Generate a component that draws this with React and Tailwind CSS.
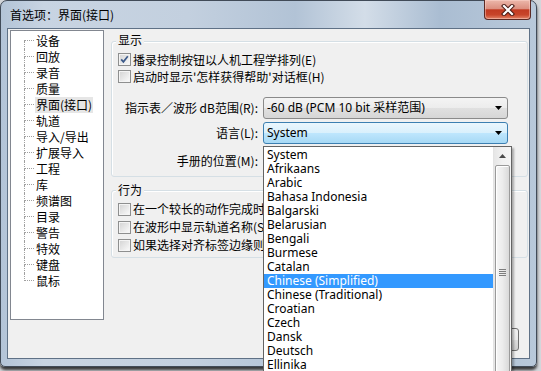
import React from "react";

const TREE = ["设备","回放","录音","质量","界面(接口)","轨道","导入/导出","扩展导入","工程","库","频谱图","目录","警告","特效","键盘","鼠标"];
const LANGS = ["System","Afrikaans","Arabic","Bahasa Indonesia","Balgarski","Belarusian","Bengali","Burmese","Catalan","Chinese (Simplified)","Chinese (Traditional)","Croatian","Czech","Dansk","Deutsch","Ellinika","English"];

function TreeRow({ label, first, last, selected }) {
  return (
    <div className="flex h-[16px] items-stretch">
      <div className="ml-[13px] flex w-[10px] flex-col">
        <div className={first ? "h-[8px] border-b border-dotted border-[#a0a0a0]" : "h-[8px] border-b border-l border-dotted border-[#a0a0a0]"} />
        <div className={last ? "flex-1" : "flex-1 border-l border-dotted border-[#a0a0a0]"} />
      </div>
      <span className={selected ? "ml-[1px] bg-[#e6e6e6] px-[1px] leading-[16px]" : "ml-[1px] px-[1px] leading-[16px]"}>{label}</span>
    </div>
  );
}

function Checkbox({ checked }) {
  return (
    <span className="flex h-[13px] w-[13px] shrink-0 border border-[#8e8f8f] bg-white">
      <span className="flex h-[11px] w-[11px] items-center justify-center border border-[#f4f4f4] bg-linear-to-br from-[#d6d6d6] to-[#f8f8f8]">
        {checked && (
          <svg width="9" height="9" viewBox="0 0 9 9">
            <path d="M1.2 4.4 L3.4 6.9 L7.8 1.3" fill="none" stroke="#3c5a8a" strokeWidth="1.7" />
          </svg>
        )}
      </span>
    </span>
  );
}

function CheckRow({ checked, children, h }) {
  return (
    <div className={h === 18 ? "flex h-[18px] items-center pl-[6px]" : "flex h-[17px] items-center pl-[6px]"}>
      <Checkbox checked={checked} />
      <span className="ml-[2px] whitespace-nowrap leading-[16px]">{children}</span>
    </div>
  );
}

function Arrow() {
  return (
    <svg width="7" height="4" viewBox="0 0 7 4" className="shrink-0">
      <path d="M0 0H7L3.5 4Z" fill="#000" />
    </svg>
  );
}

function Combo({ children, focused }) {
  return (
    <div
      className={
        focused
          ? "flex h-[22px] w-[245px] items-center justify-between rounded-[3px] border border-[#3c7fb1] bg-[linear-gradient(180deg,#eaf6fd_0%,#d9f0fc_50%,#bee6fd_51%,#a7d9f5_100%)] pl-[3px] pr-[5px]"
          : "flex h-[22px] w-[245px] items-center justify-between rounded-[3px] border border-[#8a8a8a] bg-[linear-gradient(180deg,#f4f4f4_0%,#ececec_50%,#e0e0e0_51%,#d6d6d6_100%)] pl-[3px] pr-[5px]"
      }
    >
      <span className="whitespace-nowrap font-['Noto_Sans','Noto_Sans_CJK_SC',sans-serif] text-[12px] leading-[16px]">{children}</span>
      <Arrow />
    </div>
  );
}

function FieldRow({ label, children, mt }) {
  return (
    <div className={`flex h-[22px] items-center ${mt}`}>
      <div className="w-[146px] shrink-0 whitespace-nowrap text-right leading-[16px]">{label}</div>
      <div className="ml-[5px]">{children}</div>
    </div>
  );
}

export default function App() {
  return (
    <div className="relative h-[371px] w-[541px] overflow-hidden bg-[#d3d6da] font-['Noto_Sans_CJK_SC',sans-serif] text-[12px] text-black">
      {/* window */}
      <div className="flex h-[367px] w-[537px] flex-col rounded-t-[7px] rounded-b-[5px] border border-[#414b58] bg-[linear-gradient(90deg,#b3c4d7_0%,#c8d4e2_8%,#c3d0df_35%,#b2c3d6_55%,#d3dde8_68%,#aabdd2_82%,#b9c9da_100%)] shadow-[0_3px_3px_rgba(0,0,0,0.75)]">
        {/* title bar */}
        <div className="flex h-[27px] shrink-0 items-start justify-between">
          <span className="ml-[9px] self-center leading-[16px] text-[#000]">首选项：界面(接口)</span>
          <div className="mr-[5px] -mt-[1px] flex h-[20px] w-[47px] items-center justify-center rounded-b-[4px] border border-t-0 border-[#5c2a24] bg-[linear-gradient(180deg,#ecb8ab_0%,#dc9080_45%,#c23b22_52%,#c8452a_78%,#e38468_100%)] shadow-[inset_0_0_0_1px_rgba(255,220,210,0.45)]">
            <svg width="14" height="12" viewBox="0 0 14 12">
              <path d="M3 2L11 10M11 2L3 10" stroke="#4a1c16" strokeWidth="4.2" strokeLinecap="square" />
              <path d="M3 2L11 10M11 2L3 10" stroke="#ffffff" strokeWidth="2.2" strokeLinecap="square" />
            </svg>
          </div>
        </div>
        {/* body */}
        <div className="flex flex-1 flex-col px-[6px] pb-[7px]">
          <div className="flex flex-1 flex-col border border-[#5f7186] bg-[#f0f0f0]">
            <div className="flex items-start">
              {/* tree */}
              <div className="ml-[2px] mt-[1px] h-[290px] w-[94px] shrink-0 border border-[#828790] bg-white pt-[2px]">
                {TREE.map((t, i) => (
                  <TreeRow key={t} label={t} first={i === 0} last={i === TREE.length - 1} selected={t === "界面(接口)"} />
                ))}
              </div>
              {/* right column */}
              <div className="ml-[7px] mr-[1px] flex flex-1 flex-col pt-[12px]">
                <div className="flex h-[136px] flex-col rounded-[3px] border border-[#d5dfe5] shadow-[inset_1px_1px_0_#ffffff]">
                  <div className="-mt-[10px] ml-[4px] w-fit bg-[#f0f0f0] px-[2px] leading-[16px]">显示</div>
                  <div className="mt-[3px]">
                    <CheckRow checked>播录控制按钮以人机工程学排列(E)</CheckRow>
                    <CheckRow>启动时显示'怎样获得帮助'对话框(H)</CheckRow>
                  </div>
                  <FieldRow label="指示表／波形 dB范围(R):" mt="mt-[12px]">
                    <Combo>-60 dB (PCM 10 bit 采样范围)</Combo>
                  </FieldRow>
                  <FieldRow label="语言(L):" mt="mt-[3px]">
                    <Combo focused>System</Combo>
                  </FieldRow>
                  <FieldRow label="手册的位置(M):" mt="mt-[6px]">
                    <Combo>从网络</Combo>
                  </FieldRow>
                </div>
                <div className="mt-[13px] flex h-[68px] flex-col rounded-[3px] border border-[#d5dfe5] shadow-[inset_1px_1px_0_#ffffff]">
                  <div className="-mt-[9px] ml-[4px] w-fit bg-[#f0f0f0] px-[2px] leading-[16px]">行为</div>
                  <div className="mt-[2px]">
                    <CheckRow h={18}>在一个较长的动作完成时发出哔声(B)</CheckRow>
                    <CheckRow h={18}>在波形中显示轨道名称(S)</CheckRow>
                    <CheckRow h={18}>如果选择对齐标签边缘则编辑标签(A)</CheckRow>
                  </div>
                </div>
              </div>
            </div>
            <div className="flex-1" />
            <div className="flex justify-end gap-[6px] pb-[7px] pr-[10px]">
              <div className="flex h-[23px] w-[75px] items-center justify-center rounded-[3px] border border-[#707070] bg-[linear-gradient(180deg,#f2f2f2_0%,#ebebeb_50%,#dddddd_51%,#cfcfcf_100%)]">确定</div>
              <div className="flex h-[23px] w-[75px] items-center justify-center rounded-[3px] border border-[#707070] bg-[linear-gradient(180deg,#f2f2f2_0%,#ebebeb_50%,#dddddd_51%,#cfcfcf_100%)]">取消</div>
            </div>
          </div>
        </div>
      </div>

      {/* dropdown list (overlay) */}
      <div className="absolute left-[263px] top-[146px] flex h-[240px] w-[249px] border border-[#646464] bg-white shadow-[2px_2px_2px_rgba(0,0,0,0.3)]">
        <div className="flex-1 pt-[1px] font-['Noto_Sans',sans-serif] text-[12px]">
          {LANGS.map((l) => (
            <div
              key={l}
              className={l === "Chinese (Simplified)" ? "h-[14px] whitespace-nowrap bg-[#3399ff] pl-[3px] leading-[14px] text-white" : "h-[14px] whitespace-nowrap pl-[3px] leading-[14px] text-black"}
            >
              {l}
            </div>
          ))}
        </div>
        <div className="flex w-[18px] shrink-0 flex-col border-l border-[#e3e3e3] bg-[linear-gradient(90deg,#e6e6e6_0%,#f1f1f1_50%,#f4f4f4_100%)]">
          <div className="flex h-[17px] shrink-0 items-center justify-center">
            <svg width="7" height="4" viewBox="0 0 7 4">
              <path d="M0 4H7L3.5 0Z" fill="#4a4a4a" />
            </svg>
          </div>
          <div className="mx-[1px] mt-[1px] flex h-[214px] shrink-0 items-center justify-center rounded-[2px] border border-[#9a9a9a] bg-[linear-gradient(90deg,#f6f6f6_0%,#ececec_50%,#d9d9d9_100%)] shadow-[inset_1px_1px_0_#ffffff]">
            <div className="flex w-[7px] flex-col gap-[1px]">
              <div className="h-[1px] bg-[#7d7d7d]" />
              <div className="h-[1px] bg-[#7d7d7d]" />
              <div className="h-[1px] bg-[#7d7d7d]" />
              <div className="h-[1px] bg-[#7d7d7d]" />
            </div>
          </div>
        </div>
      </div>
    </div>
  );
}
